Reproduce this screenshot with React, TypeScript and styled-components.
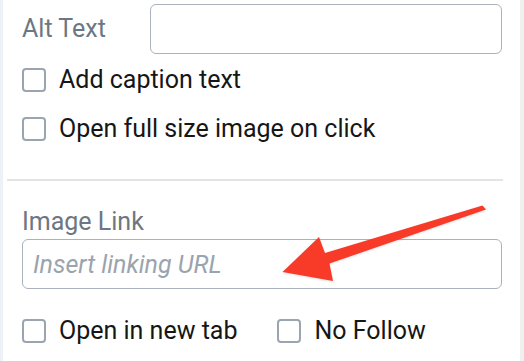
import styled, { createGlobalStyle } from 'styled-components'

const GlobalStyle = createGlobalStyle`
  html, body {
    margin: 0;
    padding: 0;
    background: #ffffff;
  }
  body {
    font-family: Roboto, "Liberation Sans", sans-serif;
  }
`

const Page = styled.div`
  position: relative;
  display: flex;
  width: 524px;
  height: 361px;
  overflow: hidden;
`

const Strip = styled.div<{ $w: number; $c: string }>`
  flex: 0 0 ${({ $w }) => $w}px;
  background: ${({ $c }) => $c};
`

const Panel = styled.div`
  flex: 1;
  display: flex;
  flex-direction: column;
  padding: 4px 18px 0 19px;
`

const FieldRow = styled.div`
  display: flex;
  align-items: center;
`

const Label = styled.label<{ $width?: number }>`
  font-size: 25px;
  line-height: 28px;
  color: #6c7783;
  ${({ $width }) => !!$width && `flex: 0 0 ${$width}px;`}
`

const TextInput = styled.input`
  flex: 1 0 auto;
  box-sizing: border-box;
  height: 50px;
  min-height: 50px;
  border: 1.5px solid #aab3bd;
  border-radius: 6px;
  padding: 0 10px;
  font-family: Roboto, "Liberation Sans", sans-serif;
  font-size: 25px;
  color: #222;
  background: #fff;
  outline: none;

  &::placeholder {
    font-style: italic;
    color: #9aa4ae;
  }
`

const CheckRow = styled.div<{ $top: number }>`
  display: flex;
  align-items: center;
  margin-top: ${({ $top }) => $top}px;
`

const Check = styled.label<{ $gap?: number }>`
  display: flex;
  align-items: center;
  gap: 13px;
  font-size: 25px;
  line-height: 28px;
  color: #161616;
  ${({ $gap }) => !!$gap && `margin-left: ${$gap}px;`}
`

const Box = styled.span`
  box-sizing: border-box;
  width: 24px;
  height: 24px;
  border: 2px solid #9ba5b0;
  border-radius: 4px;
  background: #fff;
`

const Divider = styled.hr`
  border: none;
  height: 2px;
  background: #e4e4e1;
  margin: 36px -1px 27px -15px;
`

const LinkBlock = styled.div`
  display: flex;
  flex-direction: column;
  gap: 3px;
`

const Arrow = styled.svg`
  position: absolute;
  left: 0;
  top: 0;
  pointer-events: none;
  filter: drop-shadow(0 1px 1px rgba(0, 0, 0, 0.12));
`

export default function App() {
  return (
    <>
      <GlobalStyle />
      <Page>
        <Strip $w={3} $c="#eef1f5" />
        <Panel>
          <FieldRow>
            <Label $width={128}>Alt Text</Label>
            <TextInput />
          </FieldRow>
          <CheckRow $top={11.5}>
            <Check><Box />Add caption text</Check>
          </CheckRow>
          <CheckRow $top={21.5}>
            <Check><Box />Open full size image on click</Check>
          </CheckRow>
          <Divider />
          <LinkBlock>
            <Label>Image Link</Label>
            <TextInput placeholder="Insert linking URL" />
          </LinkBlock>
          <CheckRow $top={28}>
            <Check><Box />Open in new tab</Check>
            <Check $gap={40}><Box />No Follow</Check>
          </CheckRow>
        </Panel>
        <Strip $w={4} $c="#f0f0f0" />
        <Arrow width="524" height="361" viewBox="0 0 524 361">
          <polygon
            points="482.5,205.5 486,209.5 329.5,263.5 333,281 282.5,272 319,237 325,253"
            fill="#f83a28"
          />
        </Arrow>
      </Page>
    </>
  )
}
